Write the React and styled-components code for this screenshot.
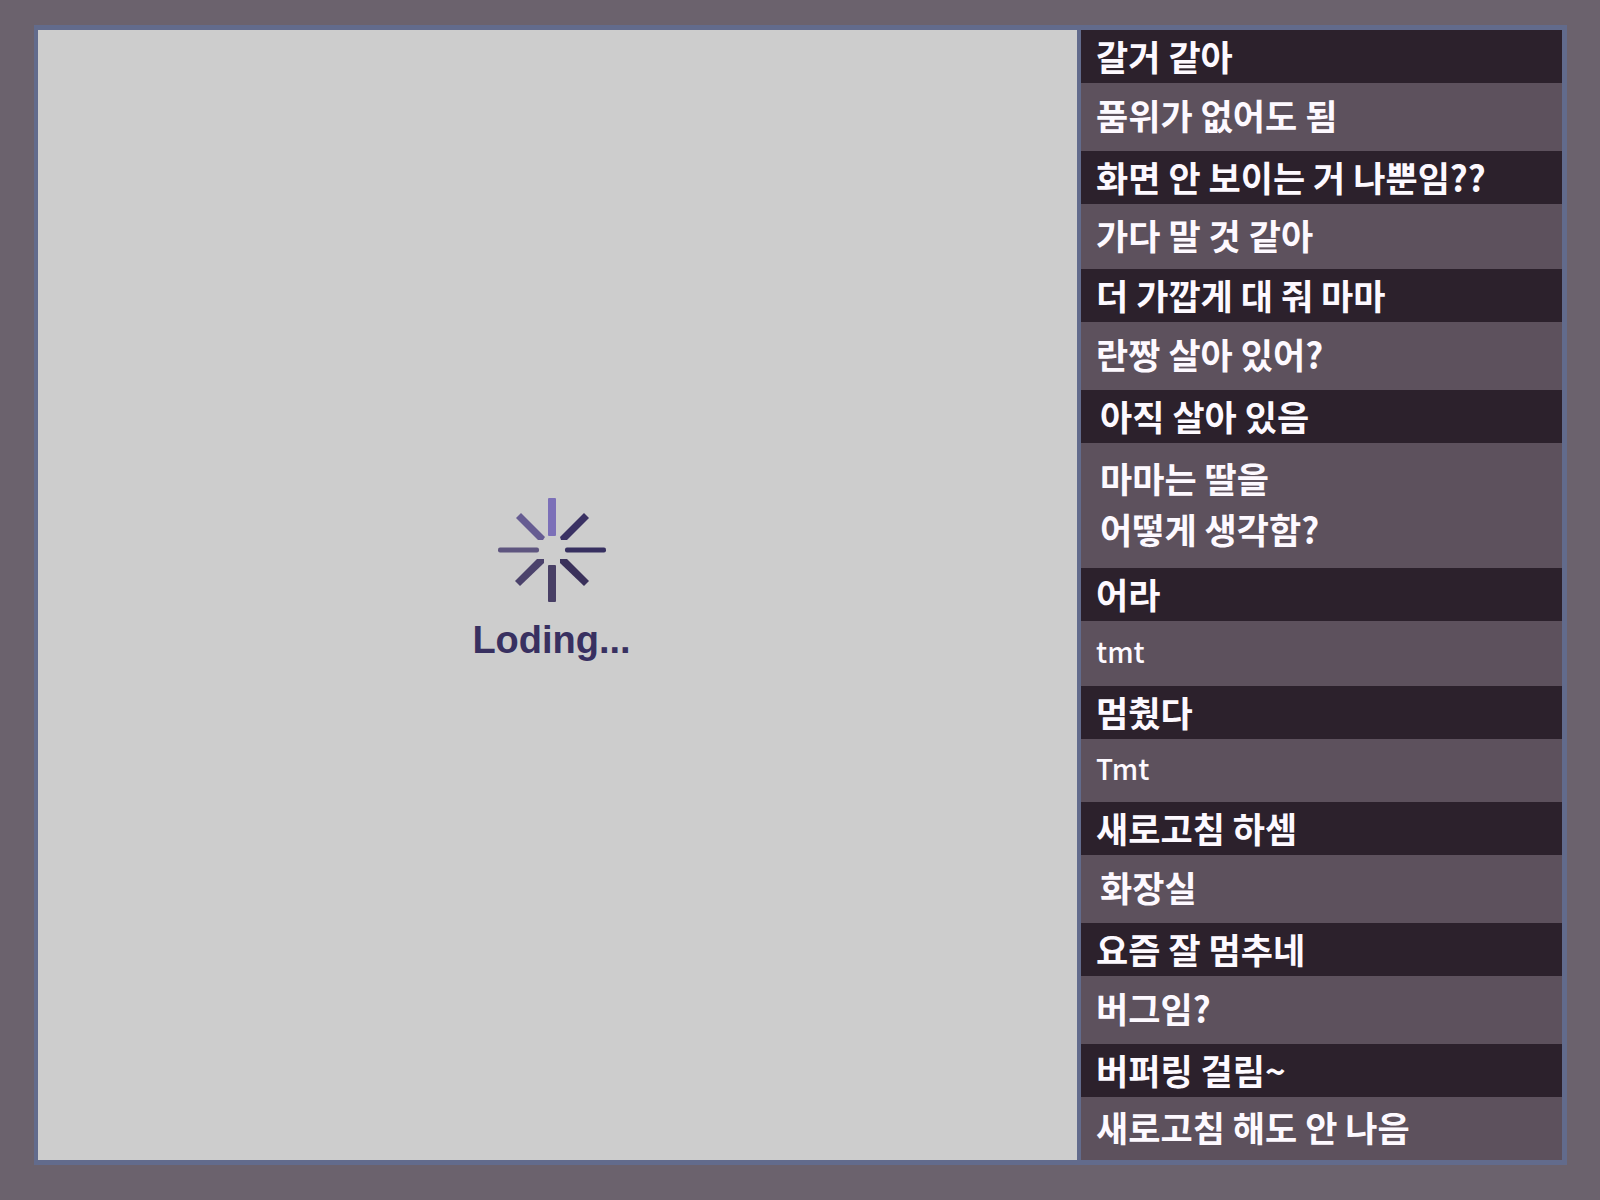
import React from "react";
import styled, { createGlobalStyle } from "styled-components";

const GlobalStyle = createGlobalStyle`
  *, *::before, *::after { box-sizing: border-box; }
  html, body { margin: 0; background: #6b626d; }
`;

const Page = styled.main`
  min-height: 100vh;
  padding: 25px 33px 34px 34px;
  background: #6b626d;
  font-family: "Noto Sans CJK KR", sans-serif;
`;

const Frame = styled.div`
  display: grid;
  grid-template-columns: 15fr 7fr;
  border: 5px solid #626b8c;
  border-left-width: 4px;
`;

const Screen = styled.section`
  display: flex;
  flex-direction: column;
  align-items: center;
  justify-content: center;
  gap: 16px;
  padding: 0 12px 30px 0;
  background: #cdcdcd;
`;

const SpinnerArt = styled.svg`
  display: block;
  width: 108px;
  height: 104px;
`;

const LoadingText = styled.p`
  margin: 0;
  color: #383060;
  font: bold 38px/44px "Liberation Sans", Arial, sans-serif;
`;

const Chat = styled.ul`
  margin: 0;
  padding: 0;
  list-style: none;
  border-left: 4px solid #626b8c;
`;

const rowHeights = { dark: 53, short: 63, medium: 65, tall: 68, double: 125 };

const Message = styled.li`
  display: flex;
  align-items: center;
  min-height: ${(p) => rowHeights[p.$size]}px;
  padding: 0 16px ${(p) => (p.$size === "dark" ? 2 : 5)}px ${(p) => (p.$inset ? 19 : 15)}px;
  background: ${(p) => (p.$size === "dark" ? "#2c212c" : "#5d515d")};
  color: #fdf9ff;
  font-size: ${(p) => (p.$latin ? 28 : 35)}px;
  font-weight: ${(p) => (p.$latin ? 500 : 700)};
  line-height: 51px;
  white-space: pre-line;
`;

const messages = [
  { text: "갈거 같아", size: "dark" },
  { text: "품위가 없어도 됨", size: "tall" },
  { text: "화면 안 보이는 거 나뿐임??", size: "dark" },
  { text: "가다 말 것 같아", size: "medium" },
  { text: "더 가깝게 대 줘 마마", size: "dark" },
  { text: "란짱 살아 있어?", size: "tall" },
  { text: "아직 살아 있음", size: "dark", inset: true },
  { text: "마마는 딸을\n어떻게 생각함?", size: "double", inset: true },
  { text: "어라", size: "dark" },
  { text: "tmt", size: "medium", latin: true },
  { text: "멈췄다", size: "dark" },
  { text: "Tmt", size: "short", latin: true },
  { text: "새로고침 하셈", size: "dark" },
  { text: "화장실", size: "tall", inset: true },
  { text: "요즘 잘 멈추네", size: "dark" },
  { text: "버그임?", size: "tall" },
  { text: "버퍼링 걸림~", size: "dark" },
  { text: "새로고침 해도 안 나음", size: "short" },
];

function Spinner() {
  return (
    <SpinnerArt viewBox="-54 -52 108 104" aria-hidden="true">
      <rect x="-4" y="-52" width="8" height="38" rx="1" fill="#7c70b8" />
      <path d="M8 -13 L32 -37 L37 -32 L15 -10 L9 -10 Z" fill="#3a3163" />
      <rect x="13" y="-2.5" width="41" height="5" rx="2" fill="#373060" />
      <path d="M8 9 L15 9 L37 31 L32 36 L8 13 Z" fill="#3a315b" />
      <rect x="-4" y="15" width="8" height="37" rx="1" fill="#483f65" />
      <path d="M-8 9 L-8 13 L-32 36 L-37 31 L-15 9 Z" fill="#4b426b" />
      <rect x="-54" y="-2.5" width="41" height="5" rx="2" fill="#5e557f" />
      <path d="M-36 -32 L-31 -37 L-7 -13 L-9 -10 L-14 -10 Z" fill="#665c92" />
    </SpinnerArt>
  );
}

export default function App() {
  return (
    <>
      <GlobalStyle />
      <Page>
        <Frame>
          <Screen role="status">
            <Spinner />
            <LoadingText>Loding...</LoadingText>
          </Screen>
          <Chat>
            {messages.map((m) => (
              <Message key={m.text} $size={m.size} $inset={m.inset} $latin={m.latin}>
                {m.text}
              </Message>
            ))}
          </Chat>
        </Frame>
      </Page>
    </>
  );
}
